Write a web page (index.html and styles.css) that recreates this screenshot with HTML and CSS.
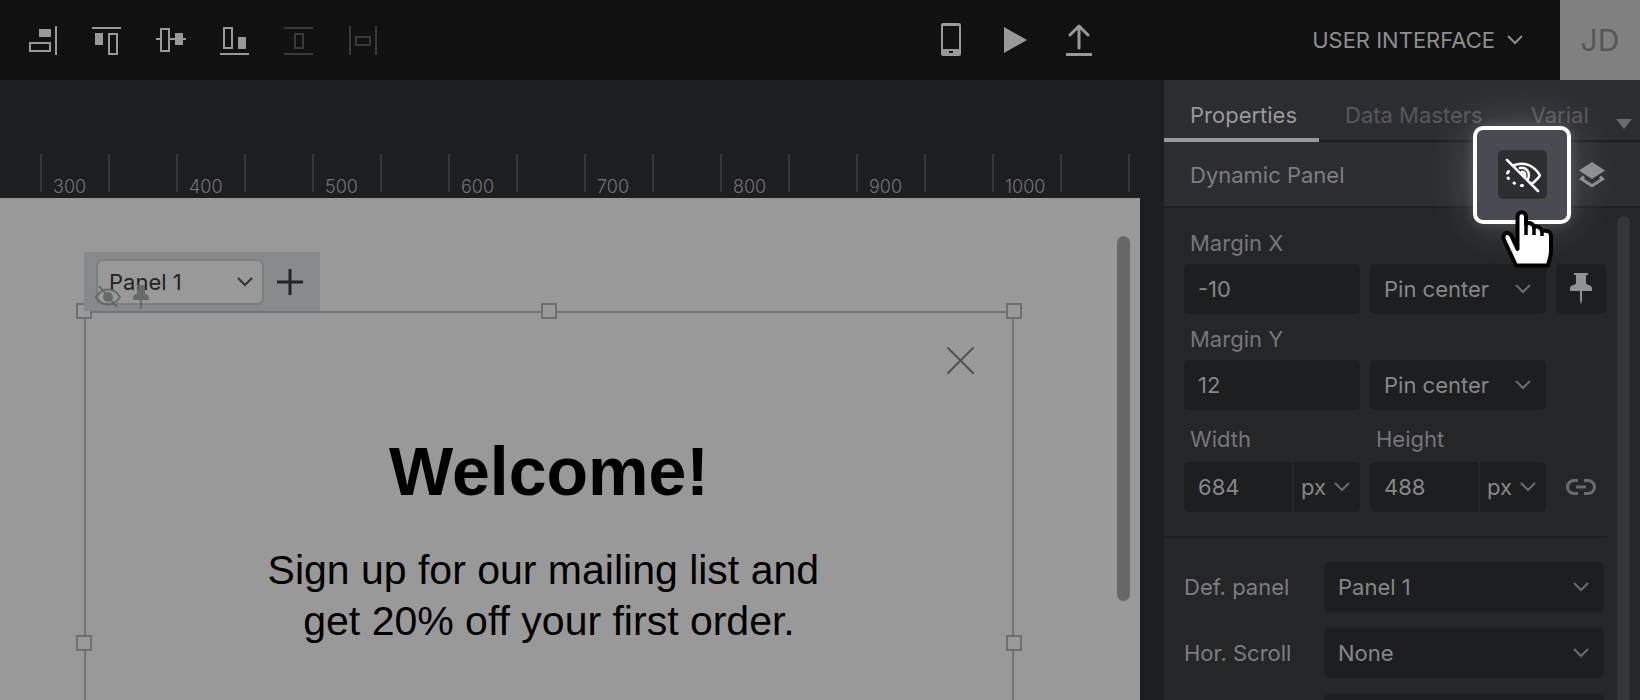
FILE: index.html
```html
<!DOCTYPE html>
<html lang="en">
  <head>
    <meta charset="utf-8">
    <title>User Interface</title>
    <link rel="stylesheet" href="styles.css">
  </head>
  <body>
    <header class="topbar">
      <div class="align-tools">
        <button class="tool" aria-label="Align right">
          <svg width="30" height="30"><path d="M11 4h12v8H11z" fill="currentColor" stroke="none"/><path d="M2 18h20v8H2zM28 1v29" /></svg>
        </button>
        <button class="tool" aria-label="Align top">
          <svg width="30" height="30"><path d="M3 8h8v12H3z" fill="currentColor" stroke="none"/><path d="M0 3h29M17 9h8v20h-8z"/></svg>
        </button>
        <button class="tool" aria-label="Align middle">
          <svg width="30" height="30"><path d="M19 8h8v12h-8z" fill="currentColor" stroke="none"/><path d="M0 14h4M14 14h16M5 4h8v22H5z"/></svg>
        </button>
        <button class="tool" aria-label="Align bottom">
          <svg width="30" height="30"><path d="M18 12h8v12h-8z" fill="currentColor" stroke="none"/><path d="M0 29h29M4 3h8v20H4z"/></svg>
        </button>
        <button class="tool" aria-label="Distribute vertically" disabled>
          <svg width="30" height="30"><path d="M0 3h29M0 29h29M11 9h8v14h-8z"/></svg>
        </button>
        <button class="tool" aria-label="Distribute horizontally" disabled>
          <svg width="30" height="30"><path d="M2 1v29M28 1v29M8 12h14v8H8z"/></svg>
        </button>
      </div>

      <div class="actions">
        <button class="action" aria-label="Device preview">
          <svg width="20" height="34"><path fill="currentColor" fill-rule="evenodd" d="M2 0h16a2 2 0 0 1 2 2v29a2 2 0 0 1-2 2H2a2 2 0 0 1-2-2V2a2 2 0 0 1 2-2zM2 3v23h16V3zM8 28v2h4v-2z"/></svg>
        </button>
        <button class="action" aria-label="Play">
          <svg width="24" height="26"><path fill="currentColor" d="M1 0l23 13L1 26z"/></svg>
        </button>
        <button class="action" aria-label="Publish">
          <svg width="26" height="32" fill="none" stroke="currentColor"><path d="M13 24V2M4 11l9-9 9 9" stroke-width="3" stroke-linecap="round" stroke-linejoin="round"/><path d="M0 30.500h26" stroke-width="3"/></svg>
        </button>
      </div>

      <button class="project">
        USER INTERFACE
        <svg width="16" height="10" fill="none" stroke="currentColor" stroke-width="2"><path d="M1 1l7 7 7-7"/></svg>
      </button>
      <button class="avatar">JD</button>
    </header>

    <div class="workspace">
      <main class="editor">
        <div class="ruler">
          <span>300</span><span></span>
          <span>400</span><span></span>
          <span>500</span><span></span>
          <span>600</span><span></span>
          <span>700</span><span></span>
          <span>800</span><span></span>
          <span>900</span><span></span>
          <span>1000</span><span></span>
          <span></span>
        </div>

        <div class="canvas">
          <div class="stage">
            <div class="panel-bar">
              <select class="panel-select" aria-label="Panel">
                <option>Panel 1</option>
              </select>
              <button class="add-panel" aria-label="Add panel">
                <svg width="28" height="28" stroke="currentColor" stroke-width="3"><path d="M1 14h26M14 1v26"/></svg>
              </button>
              <div class="badges">
                <svg width="26" height="24" fill="none" stroke="currentColor" stroke-width="2"><path d="M1 12C7 2 19 2 25 12 19 22 7 22 1 12z"/><circle cx="13" cy="12" r="5" fill="currentColor" stroke="none"/><path d="M4 1l18 21"/></svg>
                <svg width="16" height="25" fill="currentColor"><path d="M4 0h8v9c3 0 4 2 4 6H0c0-4 1-6 4-6zM7 15h2v9H7z"/></svg>
              </div>
            </div>

            <div class="frame">
              <i class="handle top-left"></i>
              <i class="handle top"></i>
              <i class="handle top-right"></i>
              <i class="handle left"></i>
              <i class="handle right"></i>
              <button class="close" aria-label="Close">
                <svg width="28" height="28" stroke="currentColor" stroke-width="2" stroke-linecap="round"><path d="M2 1l25 25M27 1L2 26"/></svg>
              </button>
              <h1>Welcome!</h1>
              <p>Sign up for our mailing list and&nbsp;<br>get 20% off your first order.</p>
            </div>
          </div>
          <div class="canvas-scroll"><div class="thumb"></div></div>
        </div>
      </main>

      <aside class="inspector">
        <nav class="tabs">
          <a class="tab active" href="#properties">Properties</a>
          <a class="tab" href="#data-masters">Data Masters</a>
          <a class="tab" href="#variables">Varial</a>
          <button class="more-tabs" aria-label="More tabs">
            <svg width="16" height="10" fill="currentColor"><path d="M0 0h16L8 10z"/></svg>
          </button>
        </nav>

        <div class="widget-head">
          <h2>Dynamic Panel</h2>
          <div class="spotlight">
            <button class="hide-button" aria-label="Hide">
              <svg width="38" height="36" fill="none" stroke="currentColor" stroke-width="2.500" stroke-linecap="round" stroke-linejoin="round">
                <path d="M4 3l31 31"/>
                <path d="M10.500 8.500C20 4 31 8 37 18.500c-2 3-4 5-7 7.500h-3"/>
                <path d="M17 11c6-1 11 4 8 11"/>
                <path d="M19 15c2 0 3 2 3 4" stroke-width="3"/>
                <path d="M5.500 14.500l-1 1.500M5 21l.5.500M11 26l.5.300M18.500 28.500h1" stroke-width="3"/>
              </svg>
            </button>
            <svg class="pointer" width="54" height="60">
              <path d="M16.500 40V7.500a4.200 4.200 0 0 1 8.500 0V15c2-2 7-1 8 3 3-1 7 0 8 4 4-1 9 0 9 5v15c0 6-2 9-3 14.500H15L4 33c-4-7 1-12 6-7z" fill="#fff" stroke="#000" stroke-width="4" stroke-linejoin="round"/>
              <path d="M25 13v13M33 18v8M41 22v5" stroke="#000" stroke-width="3.500"/>
            </svg>
          </div>
          <button class="layers" aria-label="Layers">
            <svg width="26" height="26"><path fill="currentColor" d="M13 0l13 8.500L13 17 0 8.500z"/><path fill="none" stroke="currentColor" stroke-width="3" d="M5 14.500L2.500 17 13 23.800 23.500 17 21 14.500"/></svg>
          </button>
        </div>

        <div class="inspector-body">
          <form class="form">
            <div class="size-grid">
              <label class="wide" for="margin-x">Margin X</label>
              <input class="field" id="margin-x" value="-10">
              <select class="field" aria-label="Horizontal pin">
                <option>Pin center</option>
              </select>
              <button class="pin-button" type="button" aria-label="Pin to browser">
                <svg width="22" height="32" fill="currentColor"><path d="M4 0h14v2h-2v8c0 2 6 2 6 5v3H0v-3c0-3 6-3 6-5V2H4zM10 18h2v9l-1 5-1-5z"/></svg>
              </button>

              <label class="wide" for="margin-y">Margin Y</label>
              <input class="field" id="margin-y" value="12">
              <select class="field" aria-label="Vertical pin">
                <option>Pin center</option>
              </select>
              <span></span>

              <label class="size-label" for="width">Width</label>
              <label class="size-label" for="height">Height</label>
              <span></span>
              <div class="split">
                <input class="field" id="width" value="684">
                <select class="field unit" aria-label="Width unit">
                  <option>px</option>
                </select>
              </div>
              <div class="split">
                <input class="field" id="height" value="488">
                <select class="field unit" aria-label="Height unit">
                  <option>px</option>
                </select>
              </div>
              <button class="link-button" type="button" aria-label="Keep proportions">
                <svg width="30" height="16" fill="none" stroke="currentColor" stroke-width="3"><path d="M12 1.500H8a6.500 6.500 0 0 0 0 13h4M18 1.500h4a6.500 6.500 0 0 1 0 13h-4M10 8h10"/></svg>
              </button>
            </div>

            <div class="option-list">
              <div class="option-row">
                <label for="def-panel">Def. panel</label>
                <select class="field" id="def-panel"><option>Panel 1</option></select>
              </div>
              <div class="option-row">
                <label for="hor-scroll">Hor. Scroll</label>
                <select class="field" id="hor-scroll"><option>None</option></select>
              </div>
              <div class="option-row">
                <label></label>
                <select class="field" aria-label="Vertical scroll"></select>
              </div>
            </div>
          </form>
          <div class="inspector-scroll"></div>
        </div>
      </aside>
    </div>
  </body>
</html>
```
FILE: styles.css
```css
* {
  box-sizing: border-box;
}

body {
  margin: 0;
  height: 100vh;
  display: flex;
  flex-direction: column;
  overflow: hidden;
  background: #1d1e20;
  color: #868788;
  font-family: Inter, "Open Sans", sans-serif;
  font-size: 22px;
  line-height: 26px;
}

button,
input,
select {
  font: inherit;
  color: inherit;
  border: none;
  background: none;
  padding: 0;
  margin: 0;
}

button {
  display: flex;
  align-items: center;
  justify-content: center;
  cursor: pointer;
}

svg {
  display: block;
  flex: none;
}

/* Top bar */
.topbar {
  display: flex;
  align-items: center;
  flex: none;
  height: 80px;
  background: #111;
}

.align-tools {
  display: flex;
  gap: 34px;
  padding-left: 28px;
}

.tool {
  color: #999;
}

.tool svg {
  fill: none;
  stroke: currentColor;
  stroke-width: 2;
}

.tool:disabled {
  color: #39393a;
}

.actions {
  display: flex;
  gap: 24px;
  margin-left: auto;
  color: #999;
}

.action {
  width: 40px;
  height: 40px;
}

.project {
  justify-content: flex-end;
  gap: 12px;
  width: 424px;
  color: #8d8e90;
}

.avatar {
  width: 80px;
  height: 80px;
  margin-left: 37px;
  background: #808080;
  color: #555657;
  font-size: 30px;
}

/* Canvas */
.workspace {
  display: flex;
  flex: 1;
  min-height: 0;
  gap: 24px;
}

.editor {
  display: flex;
  flex: 1;
  flex-direction: column;
  min-width: 0;
}

.ruler {
  display: flex;
  flex: none;
  height: 118px;
  padding: 74px 0 0 40px;
  overflow: hidden;
  color: #737476;
  font-size: 18px;
  font-weight: 300;
}

.ruler span {
  flex: none;
  width: 68px;
  height: 38px;
  padding: 21px 0 0 11px;
  border-left: 2px solid #353638;
  line-height: 24px;
}

.canvas {
  display: flex;
  flex: 1;
  min-height: 0;
  overflow: hidden;
  background: #999;
}

.stage {
  flex: 1;
  padding: 54px 0 0 84px;
}

.canvas-scroll {
  padding: 38px 10px 0 0;
}

.thumb {
  width: 13px;
  height: 365px;
  border-radius: 7px;
  background: #666769;
}

.panel-bar {
  position: relative;
  z-index: 1;
  display: flex;
  align-items: center;
  gap: 12px;
  width: 236px;
  height: 59px;
  padding-left: 12px;
  background: #88898b;
  color: #222324;
}

.panel-select {
  width: 168px;
  height: 46px;
  padding: 0 11px;
  border: 2px solid #7b7f80;
  border-radius: 7px;
  appearance: none;
  background: #999 url("data:image/svg+xml,%3Csvg xmlns='http://www.w3.org/2000/svg' width='16' height='10'%3E%3Cpath d='M1 1l7 7 7-7' fill='none' stroke='%23333' stroke-width='2'/%3E%3C/svg%3E") no-repeat right 9px center;
}

.badges {
  position: absolute;
  top: 33px;
  left: 11px;
  display: flex;
  gap: 12px;
  color: #5d6263;
  opacity: 0.85;
}

.frame {
  position: relative;
  width: 930px;
  height: 664px;
  padding: 34px 38px;
  border: 2px solid #707577;
  color: #000;
  font-family: "Liberation Sans", Arial, sans-serif;
  text-align: center;
}

.handle {
  position: absolute;
  width: 16px;
  height: 16px;
  margin: -10px;
  border: 2px solid #6c7072;
  background: #999;
}

.top-left,
.top,
.top-right {
  top: 0;
}

.top-left,
.left {
  left: 0;
}

.top {
  left: 50%;
  margin-left: -8px;
}

.top-right,
.right {
  right: 0;
}

.left,
.right {
  top: 50%;
  margin-top: -8px;
}

.close {
  margin-left: auto;
  color: #505253;
}

.frame h1 {
  margin: 57px 0 0;
  font-size: 68px;
  line-height: 78px;
}

.frame p {
  margin: 35px 0 0;
  font-size: 41px;
  line-height: 51px;
}

/* Inspector */
.inspector {
  display: flex;
  flex: none;
  flex-direction: column;
  width: 476px;
  background: #252628;
}

.tabs {
  display: flex;
  flex: none;
  height: 62px;
  background: #2c2d31;
  border-bottom: 2px solid #1d1e20;
}

.tab {
  height: 62px;
  padding: 22px 22px 0 26px;
  color: #57585a;
  text-decoration: none;
}

.tab.active {
  border-bottom: 4px solid #999;
  color: #999;
}

.more-tabs {
  margin: 28px 8px 0 auto;
  color: #6a6b6d;
}

.widget-head {
  display: flex;
  align-items: center;
  flex: none;
  height: 66px;
  padding: 1px 35px 0 26px;
  background: #2c2d31;
  border-bottom: 2px solid #1d1e20;
}

.widget-head h2 {
  margin: 0;
  font-size: 22px;
  font-weight: 400;
  color: #7d7e80;
}

.spotlight {
  position: relative;
  z-index: 2;
  display: flex;
  align-items: center;
  justify-content: center;
  flex: none;
  width: 98px;
  height: 98px;
  margin: -20px 8px -20px auto;
  border: 4px solid #fff;
  border-radius: 10px;
  background: #4a4a52;
  box-shadow: 0 0 12px rgba(255, 255, 255, 0.15), 0 0 50px rgba(255, 255, 255, 0.2);
}

.hide-button {
  width: 49px;
  height: 49px;
  border-radius: 5px;
  background: #2d2e30;
  color: #fff;
}

.pointer {
  position: absolute;
  top: 79px;
  left: 24px;
}

.layers {
  color: #8b8c8e;
}

.inspector-body {
  display: flex;
  flex: 1;
  min-height: 0;
  overflow: hidden;
}

.form {
  flex: 1;
}

.size-grid {
  display: grid;
  grid-template-columns: 1fr 1fr 50px;
  column-gap: 10px;
  padding: 10px 1px 24px 20px;
  border-bottom: 2px solid #1d1e20;
}

.size-grid label {
  padding: 12px 6px 8px;
  color: #76777a;
}

.wide {
  grid-column: 1 / -1;
}

.size-grid .size-label {
  padding: 16px 6px 10px;
}

.field {
  width: 100%;
  min-width: 0;
  height: 50px;
  padding: 0 14px;
  border-radius: 5px;
  background-color: #1d1e20;
}

select.field {
  appearance: none;
  background-image: url("data:image/svg+xml,%3Csvg xmlns='http://www.w3.org/2000/svg' width='16' height='10'%3E%3Cpath d='M1 1l7 7 7-7' fill='none' stroke='%236a6b6d' stroke-width='2'/%3E%3C/svg%3E");
  background-repeat: no-repeat;
  background-position: right 15px center;
}

.split {
  display: flex;
  gap: 2px;
}

.split input {
  flex: 1;
  border-radius: 5px 0 0 5px;
}

.split .unit {
  flex: none;
  width: 66px;
  padding: 0 0 0 7px;
  border-radius: 0 5px 5px 0;
  background-position: right 10px center;
}

.pin-button {
  height: 50px;
  border-radius: 5px;
  background: #1d1e20;
  color: #909294;
}

.link-button {
  color: #6a6b6d;
}

.option-list {
  display: flex;
  flex-direction: column;
  gap: 16px;
  padding: 24px 3px 0 20px;
}

.option-row {
  display: flex;
  align-items: center;
}

.option-row label {
  flex: none;
  width: 140px;
  color: #7d7e80;
}

.inspector-scroll {
  width: 13px;
  margin: 8px 10px 0;
  border-radius: 7px 7px 0 0;
  background: #343537;
}
```
